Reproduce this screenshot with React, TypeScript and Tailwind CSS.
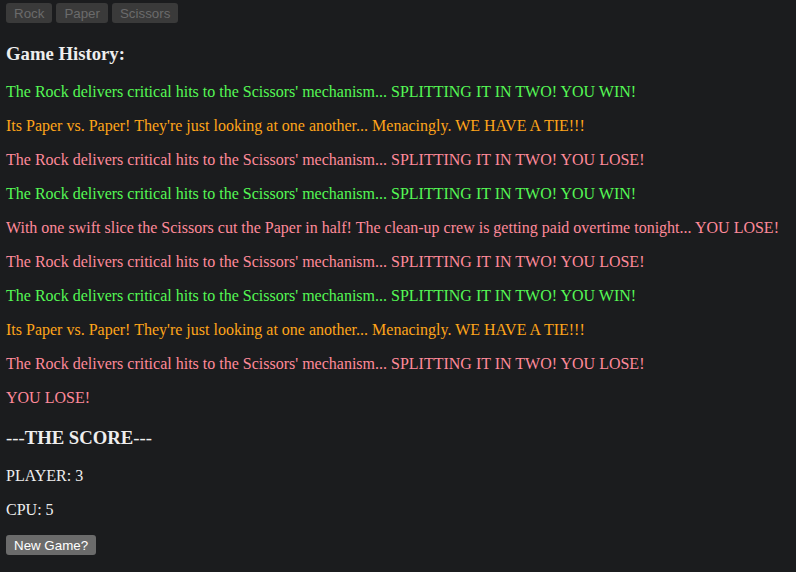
import React from 'react';

type Result = 'win' | 'tie' | 'lose';

const history: { text: string; result: Result }[] = [
  { text: "The Rock delivers critical hits to the Scissors' mechanism... SPLITTING IT IN TWO! YOU WIN!", result: 'win' },
  { text: "Its Paper vs. Paper! They're just looking at one another... Menacingly. WE HAVE A TIE!!!", result: 'tie' },
  { text: "The Rock delivers critical hits to the Scissors' mechanism... SPLITTING IT IN TWO! YOU LOSE!", result: 'lose' },
  { text: "The Rock delivers critical hits to the Scissors' mechanism... SPLITTING IT IN TWO! YOU WIN!", result: 'win' },
  { text: "With one swift slice the Scissors cut the Paper in half! The clean-up crew is getting paid overtime tonight... YOU LOSE!", result: 'lose' },
  { text: "The Rock delivers critical hits to the Scissors' mechanism... SPLITTING IT IN TWO! YOU LOSE!", result: 'lose' },
  { text: "The Rock delivers critical hits to the Scissors' mechanism... SPLITTING IT IN TWO! YOU WIN!", result: 'win' },
  { text: "Its Paper vs. Paper! They're just looking at one another... Menacingly. WE HAVE A TIE!!!", result: 'tie' },
  { text: "The Rock delivers critical hits to the Scissors' mechanism... SPLITTING IT IN TWO! YOU LOSE!", result: 'lose' },
  { text: "YOU LOSE!", result: 'lose' },
];

const colors: Record<Result, string> = {
  win: 'text-[#55f855]',
  tie: 'text-[#ffa51a]',
  lose: 'text-[#ff8a9a]',
};

const App: React.FC = () => {
  return (
    <div className="min-h-[572px] bg-[#1b1c1e] px-[6px] pt-[3px] pb-4 font-['Liberation_Serif',serif] text-[16px] leading-[18px] text-[#eeeeee]">
      {/* choice buttons, disabled once the game is over */}
      <div className="flex gap-[4px] font-['Liberation_Sans',Arial,sans-serif]">
        {['Rock', 'Paper', 'Scissors'].map((c) => (
          <button
            key={c}
            disabled
            className="h-[20px] rounded-[3px] bg-[#3a3a3a] px-[8px] text-[13.33px] leading-[15px] text-[#6b6b6b]"
          >
            {c}
          </button>
        ))}
      </div>

      <h3 className="mt-[20px] mb-[19px] text-[18.72px] leading-[21px] font-bold">Game History:</h3>

      <div className="flex flex-col gap-[16px]">
        {history.map((h, i) => (
          <p key={i} className={colors[h.result]}>
            {h.text}
          </p>
        ))}
      </div>

      <h3 className="mt-[20px] mb-[19px] text-[18.72px] leading-[21px]">
        <span className="font-normal">---</span>
        <span className="font-bold">THE SCORE</span>
        <span className="font-normal">---</span>
      </h3>

      <div className="flex flex-col gap-[16px]">
        <p>PLAYER: 3</p>
        <p>CPU: 5</p>
      </div>

      <button className="mt-[16px] h-[20px] rounded-[3px] bg-[#6b6b6b] px-[8px] font-['Liberation_Sans',Arial,sans-serif] text-[13.33px] leading-[15px] text-white">
        New Game?
      </button>
    </div>
  );
};

export default App;
